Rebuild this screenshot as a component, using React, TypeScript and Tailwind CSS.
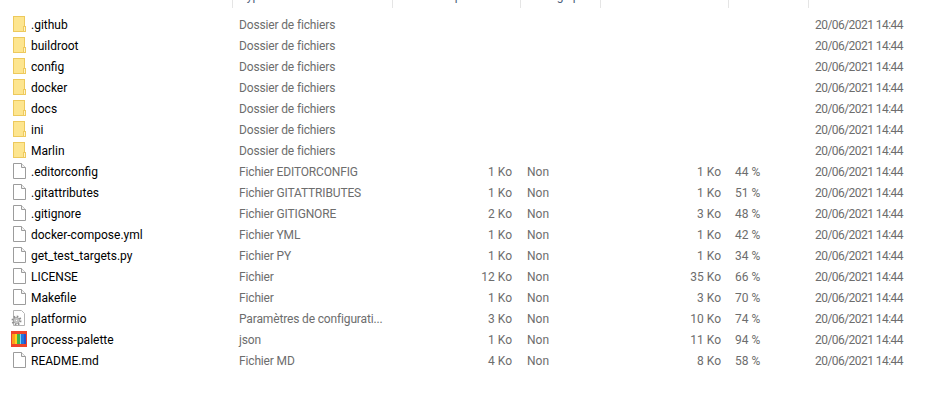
import React from 'react';

type Kind = 'folder' | 'file' | 'settings' | 'palette';

interface Row {
    name: string;
    type: string;
    kind: Kind;
    packed?: string;
    size?: string;
    ratio?: string;
}

const rows: Row[] = [
    { name: '.github', type: 'Dossier de fichiers', kind: 'folder' },
    { name: 'buildroot', type: 'Dossier de fichiers', kind: 'folder' },
    { name: 'config', type: 'Dossier de fichiers', kind: 'folder' },
    { name: 'docker', type: 'Dossier de fichiers', kind: 'folder' },
    { name: 'docs', type: 'Dossier de fichiers', kind: 'folder' },
    { name: 'ini', type: 'Dossier de fichiers', kind: 'folder' },
    { name: 'Marlin', type: 'Dossier de fichiers', kind: 'folder' },
    { name: '.editorconfig', type: 'Fichier EDITORCONFIG', kind: 'file', packed: '1 Ko', size: '1 Ko', ratio: '44 %' },
    { name: '.gitattributes', type: 'Fichier GITATTRIBUTES', kind: 'file', packed: '1 Ko', size: '1 Ko', ratio: '51 %' },
    { name: '.gitignore', type: 'Fichier GITIGNORE', kind: 'file', packed: '2 Ko', size: '3 Ko', ratio: '48 %' },
    { name: 'docker-compose.yml', type: 'Fichier YML', kind: 'file', packed: '1 Ko', size: '1 Ko', ratio: '42 %' },
    { name: 'get_test_targets.py', type: 'Fichier PY', kind: 'file', packed: '1 Ko', size: '1 Ko', ratio: '34 %' },
    { name: 'LICENSE', type: 'Fichier', kind: 'file', packed: '12 Ko', size: '35 Ko', ratio: '66 %' },
    { name: 'Makefile', type: 'Fichier', kind: 'file', packed: '1 Ko', size: '3 Ko', ratio: '70 %' },
    { name: 'platformio', type: 'Paramètres de configurati...', kind: 'settings', packed: '3 Ko', size: '10 Ko', ratio: '74 %' },
    { name: 'process-palette', type: 'json', kind: 'palette', packed: '1 Ko', size: '11 Ko', ratio: '94 %' },
    { name: 'README.md', type: 'Fichier MD', kind: 'file', packed: '4 Ko', size: '8 Ko', ratio: '58 %' },
];

const FolderIcon = () => (
    <svg width="13" height="16" viewBox="0 0 13 16" shapeRendering="crispEdges">
        <rect x="0.5" y="0.5" width="11" height="15" fill="#fde58f" stroke="#edc95c" />
        <rect x="10" y="10" width="3" height="6" fill="#efca5e" />
        <rect x="11" y="11" width="1" height="4" fill="#fff4c8" />
    </svg>
);

const FileIcon = () => (
    <svg width="13" height="16" viewBox="0 0 13 16">
        <path d="M0.5 0.5H8.5L12.5 4.5V15.5H0.5Z" fill="#fff" stroke="#9c9c9c" />
        <path d="M8.5 0.5V4.5H12.5" fill="#f2f2f2" stroke="#9c9c9c" />
    </svg>
);

const SettingsIcon = () => (
    <svg width="15" height="16" viewBox="0 0 15 16" className="-ml-[2px]">
        <path d="M2.5 0.5H10.5L13.5 3.5V15.5H2.5Z" fill="#fff" stroke="#b4b4b4" />
        <circle cx="5.5" cy="10.5" r="4" fill="none" stroke="#8f8f8f" strokeWidth="2" strokeDasharray="1.6 1.5" />
        <circle cx="5.5" cy="10.5" r="3" fill="#d4d4d4" stroke="#8f8f8f" strokeWidth="0.8" />
        <circle cx="5.5" cy="10.5" r="1.2" fill="#fff" stroke="#8f8f8f" strokeWidth="0.6" />
    </svg>
);

const PaletteIcon = () => (
    <svg width="16" height="16" viewBox="0 0 16 16" shapeRendering="crispEdges" className="-ml-[2px]">
        <rect width="16" height="16" fill="#f0432a" />
        <rect x="1" y="3" width="3" height="10" fill="#f9a11b" />
        <rect x="4" y="3" width="2" height="10" fill="#ffd21f" />
        <rect x="6" y="3" width="3" height="10" fill="#3cb54a" />
        <rect x="9" y="3" width="1" height="10" fill="#7fd3f0" />
        <rect x="10" y="3" width="3" height="10" fill="#1f78e0" />
        <rect x="13" y="3" width="2" height="10" fill="#2a4fc8" />
    </svg>
);

const icons: Record<Kind, React.FC> = {
    folder: FolderIcon,
    file: FileIcon,
    settings: SettingsIcon,
    palette: PaletteIcon,
};

const headers = [
    { label: 'Type', className: 'w-[160px]' },
    { label: 'Taille compressée', className: 'w-[128px]' },
    { label: 'Protégé par mot de passe', className: 'w-[80px]' },
    { label: 'Taille', className: 'w-[128px]' },
    { label: 'Taux', className: 'w-[80px]' },
    { label: 'Date de modification', className: 'w-[125px]' },
];

export default function App() {
    return (
        <div className="h-[401px] w-[936px] overflow-hidden bg-white font-['Roboto','Noto_Sans',sans-serif] text-[12px]">
            {/* Column headers, cut off by the top of the picture */}
            <div className="flex h-[8px] pl-[232px] text-[#4c607a]">
                {headers.map(h => (
                    <div key={h.label} className={`h-[8px] overflow-hidden whitespace-nowrap border-l border-[#e5e5e5] pl-[7px] ${h.className}`}>
                        <div className="-mt-[12px] leading-[16px]">{h.label}</div>
                    </div>
                ))}
            </div>

            <div className="mt-[6px] flex flex-col">
                {rows.map(row => {
                    const Icon = icons[row.kind];
                    return (
                        <div key={row.name} className="flex h-[21px] items-center whitespace-nowrap text-[#6d6d6d]">
                            <div className="flex h-[21px] w-[31px] justify-start pl-[13px] pt-[2px]">
                                <Icon />
                            </div>
                            <div className="w-[208px] text-[#000]">{row.name}</div>
                            <div className="w-[171px] tracking-[-0.15px]">{row.type}</div>
                            <div className="w-[102px] text-right">{row.packed}</div>
                            <div className="w-[15px]" />
                            <div className="w-[68px]">{row.packed ? 'Non' : ''}</div>
                            <div className="w-[126px] text-right">{row.size}</div>
                            <div className="w-[14px]" />
                            <div className="w-[80px]">{row.ratio}</div>
                            <div className="tracking-[-0.55px]">20/06/2021 14:44</div>
                        </div>
                    );
                })}
            </div>
        </div>
    );
}
